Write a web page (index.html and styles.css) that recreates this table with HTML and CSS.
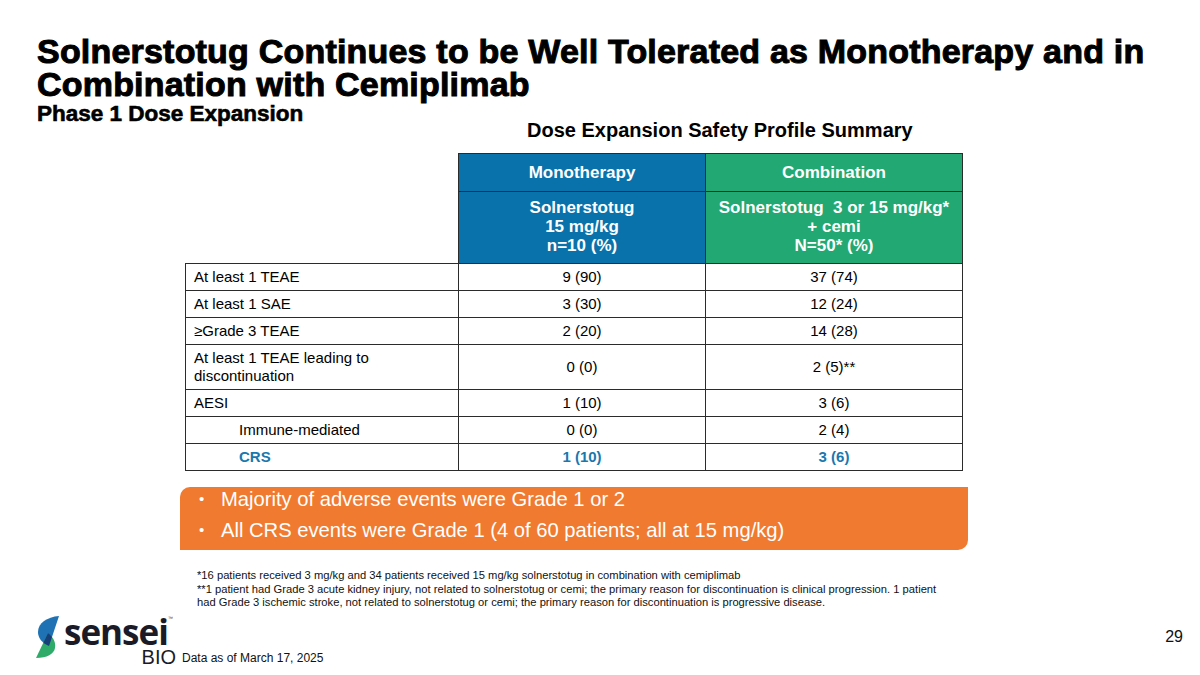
FILE: index.html
```html
<!DOCTYPE html>
<html>
<head>
<meta charset="utf-8">
<link rel="stylesheet" href="styles.css">
</head>
<body>
<div class="slide">
  <header class="header">
    <h1 class="title">Solnerstotug Continues to be Well Tolerated as Monotherapy and in Combination with Cemiplimab</h1>
    <h2 class="subtitle">Phase 1 Dose Expansion</h2>
  </header>
  <main class="content">
    <h3 class="table-title">Dose Expansion Safety Profile Summary</h3>
    <table class="safety">
      <colgroup>
        <col class="c-label">
        <col class="c-mono">
        <col class="c-combo">
      </colgroup>
      <tr class="h1">
        <td class="blank"></td>
        <th class="mono">Monotherapy</th>
        <th class="combo">Combination</th>
      </tr>
      <tr class="h2">
        <td class="blank"></td>
        <th class="mono">Solnerstotug<br>15 mg/kg<br>n=10 (%)</th>
        <th class="combo">Solnerstotug&nbsp; 3 or 15 mg/kg*<br>+ cemi<br>N=50* (%)</th>
      </tr>
      <tr><td class="label">At least 1 TEAE</td><td>9 (90)</td><td>37 (74)</td></tr>
      <tr><td class="label">At least 1 SAE</td><td>3 (30)</td><td>12 (24)</td></tr>
      <tr><td class="label">≥Grade 3 TEAE</td><td>2 (20)</td><td>14 (28)</td></tr>
      <tr class="tall"><td class="label">At least 1 TEAE leading to<br>discontinuation</td><td>0 (0)</td><td>2 (5)**</td></tr>
      <tr><td class="label">AESI</td><td>1 (10)</td><td>3 (6)</td></tr>
      <tr><td class="label indent">Immune-mediated</td><td>0 (0)</td><td>2 (4)</td></tr>
      <tr class="crs"><td class="label indent">CRS</td><td>1 (10)</td><td>3 (6)</td></tr>
    </table>
    <div class="callout">
      <ul>
        <li>Majority of adverse events were Grade 1 or 2</li>
        <li>All CRS events were Grade 1 (4 of 60 patients; all at 15 mg/kg)</li>
      </ul>
    </div>
    <div class="notes">
      <p>*16 patients received 3 mg/kg and 34 patients received 15 mg/kg solnerstotug in combination with cemiplimab</p>
      <p>**1 patient had Grade 3 acute kidney injury, not related to solnerstotug or cemi; the primary reason for discontinuation is clinical progression. 1 patient had Grade 3 ischemic stroke, not related to solnerstotug or cemi; the primary reason for discontinuation is progressive disease.</p>
    </div>
  </main>
  <footer class="footer">
    <div class="logo">
      <svg class="mark" width="30" height="44" viewBox="0 0 30 44">
        <defs>
          <clipPath id="blueclip">
            <path d="M27 1 L17 31 C10 28 6 23 6 17 C6 8 15 2 27 1 Z"/>
          </clipPath>
        </defs>
        <path d="M27 1 L17 31 C10 28 6 23 6 17 C6 8 15 2 27 1 Z" fill="#1f73b4"/>
        <path d="M16 18 C21 22 24 27 23 33 C22 39 15 43 4 43 Z" fill="#2eab68"/>
        <path d="M16 18 C21 22 24 27 23 33 C22 39 15 43 4 43 Z" fill="#173f7a" clip-path="url(#blueclip)"/>
      </svg>
      <div class="wordmark">
        <span class="sensei">sensei</span>
        <span class="bio">BIO</span>
        <span class="tm">™</span>
      </div>
    </div>
    <div class="asof">Data as of March 17, 2025</div>
    <div class="page">29</div>
  </footer>
</div>
</body>
</html>
```
FILE: styles.css
```css
* { box-sizing: border-box; }
body {
  margin: 0;
  background: #fff;
  font-family: "Liberation Sans", Arial, sans-serif;
  color: #000;
}
.slide {
  width: 1200px;
  height: 675px;
  overflow: hidden;
  display: flex;
  flex-direction: column;
}
.header {
  padding: 35px 0 0 37px;
}
.title {
  margin: 0;
  font-size: 34px;
  line-height: 33px;
  font-weight: 700;
  -webkit-text-stroke: 1px #000;
  letter-spacing: 0.2px;
}
.subtitle {
  margin: 2px 0 0;
  font-size: 22.5px;
  line-height: 22px;
  font-weight: 700;
  -webkit-text-stroke: 0.6px #000;
}
.content {
  padding-left: 185px;
}
.table-title {
  margin: -5px 0 0 342px;
  font-size: 20px;
  line-height: 20px;
  font-weight: 700;
}
.safety {
  margin-top: 13px;
  border-collapse: collapse;
  table-layout: fixed;
  width: 777px;
  font-size: 15px;
}
.c-label { width: 273px; }
.c-mono { width: 247px; }
.c-combo { width: 257px; }
.safety td, .safety th {
  border: 1.5px solid #2b2b2b;
  text-align: center;
  vertical-align: middle;
  padding: 0 8px;
  line-height: 18px;
}
.safety td.blank {
  border: none;
  border-right: 1.5px solid #2b2b2b;
}
.safety th {
  color: #fff;
  font-size: 17px;
  font-weight: 700;
  line-height: 19px;
}
.safety th.mono { background: #0a72ab; }
.safety th.combo { background: #22a872; }
.safety tr.h1 th { height: 38px; }
.safety tr.h2 th { height: 72px; padding-bottom: 2px; }
.safety tr { height: 27px; }
.safety tr.tall { height: 45px; }
.safety td.label { text-align: left; }
.safety td.indent { padding-left: 53px; }
.safety tr.crs td { color: #1a78ad; font-weight: 700; }
.callout {
  margin: 16px 0 0 -5px;
  width: 788px;
  height: 63px;
  background: #f07a2f;
  border-radius: 10px 0 10px 0;
  color: #fff;
  font-size: 20.2px;
}
.callout ul {
  margin: 0;
  padding: 0 0 0 41px;
  list-style: none;
  display: flex;
  flex-direction: column;
  gap: 7px;
}
.callout li {
  line-height: 24px;
  position: relative;
}
.callout li::before {
  content: "•";
  position: absolute;
  left: -22px;
  font-size: 15px;
}
.notes {
  margin-top: 19px;
  padding-left: 12px;
  width: 762px;
  font-size: 11.2px;
  line-height: 13.5px;
  color: #111;
}
.notes p { margin: 0; }
.footer {
  margin-top: auto;
  height: 66px;
  display: flex;
  align-items: flex-start;
  padding-left: 32px;
  padding-right: 17px;
}
.logo {
  display: flex;
  align-items: flex-start;
  padding-top: 5px;
}
.mark { display: block; }
.wordmark {
  position: relative;
  margin-left: 2px;
  width: 106px;
}
.sensei {
  display: block;
  font-family: "Open Sans", sans-serif;
  font-weight: 700;
  font-size: 35px;
  line-height: 30px;
  padding-top: 2px;
  letter-spacing: -1px;
  color: #1b1b27;
}
.tm {
  position: absolute;
  left: 104px;
  top: 0;
  font-size: 5px;
  line-height: 6px;
  color: #333;
}
.bio {
  display: block;
  text-align: right;
  font-family: "Liberation Sans", sans-serif;
  font-size: 20px;
  line-height: 18px;
  margin-top: 1px;
  color: #1b1b27;
  margin-right: -6px;
}
.asof {
  margin-left: 12px;
  padding-top: 41px;
  font-size: 12px;
  color: #111;
}
.page {
  margin-left: auto;
  padding-top: 18px;
  font-size: 16px;
  color: #111;
}
```
